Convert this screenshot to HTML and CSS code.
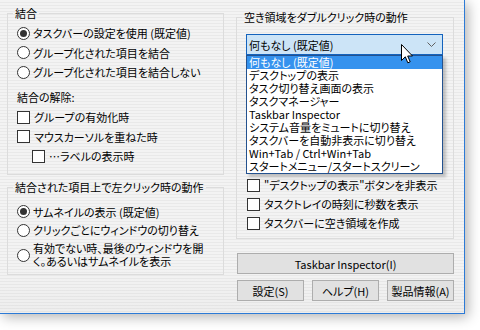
FILE: index.html
```html
<!DOCTYPE html>
<html lang="ja">
<head>
    <meta charset="UTF-8">
    <meta name="viewport" content="width=device-width, initial-scale=1.0">
    <title>7+ Taskbar Tweaker</title>
    <link rel="stylesheet" href="styles.css">
</head>
<body>
    <div class="window">
        <div class="col col-left">
            <fieldset class="group group-combine">
                <legend>結合</legend>
                <label class="opt"><span class="radio checked"></span>タスクバーの設定を使用 (既定値)</label>
                <label class="opt"><span class="radio"></span>グループ化された項目を結合</label>
                <label class="opt"><span class="radio"></span>グループ化された項目を結合しない</label>
                <div class="sub-title">結合の解除:</div>
                <label class="opt"><span class="check"></span>グループの有効化時</label>
                <label class="opt"><span class="check"></span>マウスカーソルを重ねた時</label>
                <label class="opt indent"><span class="check"></span>…ラベルの表示時</label>
            </fieldset>

            <fieldset class="group group-click">
                <legend>結合された項目上で左クリック時の動作</legend>
                <label class="opt tight"><span class="radio checked"></span>サムネイルの表示 (既定値)</label>
                <label class="opt tight"><span class="radio"></span>クリックごとにウィンドウの切り替え</label>
                <label class="opt two-line"><span class="radio"></span><span>有効でない時、最後のウィンドウを開<br>く。あるいはサムネイルを表示</span></label>
            </fieldset>
        </div>

        <div class="col col-right">
            <fieldset class="group group-dblclick">
                <legend>空き領域をダブルクリック時の動作</legend>
                <div class="combo">
                    <div class="combo-box">
                        <span>何もなし (既定値)</span>
                        <svg class="chevron" width="9" height="5" viewBox="0 0 9 5"><path d="M0.5 0.5 L4.5 4.5 L8.5 0.5" fill="none" stroke="#606060" stroke-width="1"/></svg>
                    </div>
                    <ul class="combo-list">
                        <li class="selected">何もなし (既定値)</li>
                        <li>デスクトップの表示</li>
                        <li>タスク切り替え画面の表示</li>
                        <li>タスクマネージャー</li>
                        <li>Taskbar Inspector</li>
                        <li>システム音量をミュートに切り替え</li>
                        <li>タスクバーを自動非表示に切り替え</li>
                        <li>Win+Tab / Ctrl+Win+Tab</li>
                        <li>スタートメニュー/スタートスクリーン</li>
                    </ul>
                    <svg class="cursor" width="13" height="21" viewBox="0 0 13 21"><path d="M0.5 0.5 L0.5 16.5 L4.3 12.8 L6.8 18.8 L9.2 17.8 L6.7 12 L11.5 12 Z" fill="#fff" stroke="#000" stroke-width="1" stroke-linejoin="miter"/></svg>
                </div>
                <div class="checks">
                    <label class="opt"><span class="check"></span>"デスクトップの表示"ボタンを非表示</label>
                    <label class="opt"><span class="check"></span>タスクトレイの時刻に秒数を表示</label>
                    <label class="opt"><span class="check"></span>タスクバーに空き領域を作成</label>
                </div>
            </fieldset>

            <button class="btn wide">Taskbar Inspector(I)</button>
            <div class="btn-row">
                <button class="btn">設定(S)</button>
                <button class="btn">ヘルプ(H)</button>
                <button class="btn">製品情報(A)</button>
            </div>
        </div>
    </div>
</body>
</html>
```

FILE: styles.css
```css
* {
    box-sizing: border-box;
}
html, body {
    margin: 0;
}
body {
    width: 480px;
    height: 330px;
    overflow: hidden;
    background: #fff;
    font-family: "Noto Sans CJK JP", "Noto Sans", sans-serif;
    font-size: 11px;
    color: #000;
    font-feature-settings: "palt" 1;
}
.window {
    width: 465px;
    height: 314px;
    padding: 6px 0 0 7px;
    display: grid;
    grid-template-columns: 217px 218px;
    column-gap: 12px;
    align-items: start;
    border-right: 1px solid #2c7ad6;
    border-bottom: 1px solid #2c7ad6;
    background:
        linear-gradient(to bottom, rgba(0,0,0,0) 85%, rgba(0,0,0,0.025) 100%),
        repeating-linear-gradient(to bottom, #f3f3f3 0, #f3f3f3 2px, #e9e9e9 2px, #e9e9e9 3px);
    box-shadow: 3px 3px 12px rgba(0,0,0,.3);
}
.col-right {
    padding-top: 4px;
}

/* group boxes */
.group {
    margin: 0;
    padding: 0 0 0 9px;
    min-width: 0;
    border: 1px solid #dcdcdc;
}
.group legend {
    padding: 0 2px;
    margin-left: -4px;
    line-height: 14px;
    white-space: nowrap;
}
.group-combine {
    height: 169px;
    padding-top: 3.5px;
}
.group-click {
    margin-top: 5px;
    height: 95px;
    padding-top: 8.5px;
}
.group-dblclick {
    height: 229px;
    padding-top: 10px;
}

/* radio and check rows */
.opt {
    display: flex;
    align-items: center;
    height: 19.5px;
    white-space: nowrap;
}
.opt.tight {
    height: 18.5px;
}
.opt.indent {
    padding-left: 15px;
}
.opt.two-line {
    height: auto;
    margin-top: 2.5px;
    line-height: 13px;
}
.sub-title {
    height: 19.5px;
    line-height: 19.5px;
    margin-top: 6px;
}
.radio, .check {
    flex: none;
    width: 13px;
    height: 13px;
    margin-right: 3px;
    border: 1px solid #333;
    background: #fff;
}
.radio {
    border-radius: 50%;
    position: relative;
}
.radio.checked::after {
    content: "";
    position: absolute;
    left: 2px;
    top: 2px;
    width: 7px;
    height: 7px;
    border-radius: 50%;
    background: #333;
}
.check {
    margin-right: 4px;
}

/* combo box */
.combo {
    position: relative;
    width: 197px;
}
.combo-box {
    display: flex;
    align-items: center;
    justify-content: space-between;
    height: 21px;
    padding: 0 6px 0 2px;
    border: 1px solid #1463bd;
    background: #cce4f7;
}
.chevron {
    display: block;
}
.combo-list {
    position: absolute;
    left: 0;
    top: 21px;
    width: 197px;
    margin: 0;
    padding: 0;
    list-style: none;
    background: #fff;
    border: 1px solid #24528f;
    box-shadow: 3px 3px 3px rgba(0,0,0,.22);
    z-index: 2;
}
.combo-list li {
    height: 13px;
    line-height: 13px;
    padding-left: 2px;
    white-space: nowrap;
}
.combo-list li.selected {
    background: #3592ee;
    color: #fff;
}
.cursor {
    position: absolute;
    left: 155px;
    top: 10px;
    z-index: 3;
}
.checks {
    margin-top: 120.5px;
    padding-left: 1px;
}
.checks .opt {
    height: 19px;
}

/* buttons */
.btn {
    display: block;
    height: 21px;
    padding: 0;
    font: inherit;
    color: #000;
    background: #e1e1e1;
    border: 1px solid #adadad;
}
.btn.wide {
    width: 217px;
    margin: 14px 0 0 1px;
}
.btn-row {
    display: grid;
    grid-template-columns: 67px 67px 67px;
    column-gap: 8px;
    margin: 6px 0 0 1px;
}
```
